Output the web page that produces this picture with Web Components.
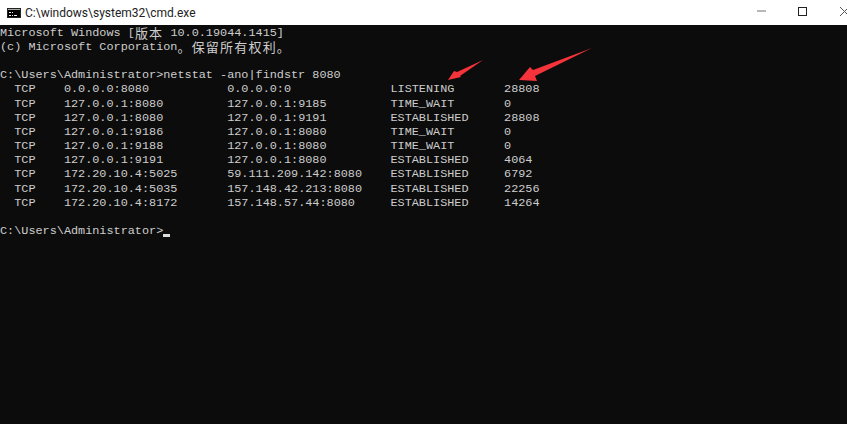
<!DOCTYPE html>
<html>
<head>
<meta charset="utf-8">
<style>
html, body { margin: 0; padding: 0; background: #0c0c0c; }
</style>
</head>
<body>
<cmd-window>
<cmd-titlebar slot="bar" label="C:\windows\system32\cmd.exe"></cmd-titlebar>
<cmd-arrows slot="over"></cmd-arrows>
<cmd-line><span>Microsoft Windows [</span><cmd-cjk><span>版本</span></cmd-cjk><span> 10.0.19044.1415]</span></cmd-line>
<cmd-line><span>(c) Microsoft Corporation</span><cmd-cjk><span>。保留所有权利。</span></cmd-cjk></cmd-line>
<cmd-line></cmd-line>
<cmd-line><span>C:\Users\Administrator&gt;netstat -ano|findstr 8080</span></cmd-line>
<cmd-row><span>TCP</span><span>0.0.0.0:8080</span><span>0.0.0.0:0</span><span>LISTENING</span><span>28808</span></cmd-row>
<cmd-row><span>TCP</span><span>127.0.0.1:8080</span><span>127.0.0.1:9185</span><span>TIME_WAIT</span><span>0</span></cmd-row>
<cmd-row><span>TCP</span><span>127.0.0.1:8080</span><span>127.0.0.1:9191</span><span>ESTABLISHED</span><span>28808</span></cmd-row>
<cmd-row><span>TCP</span><span>127.0.0.1:9186</span><span>127.0.0.1:8080</span><span>TIME_WAIT</span><span>0</span></cmd-row>
<cmd-row><span>TCP</span><span>127.0.0.1:9188</span><span>127.0.0.1:8080</span><span>TIME_WAIT</span><span>0</span></cmd-row>
<cmd-row><span>TCP</span><span>127.0.0.1:9191</span><span>127.0.0.1:8080</span><span>ESTABLISHED</span><span>4064</span></cmd-row>
<cmd-row><span>TCP</span><span>172.20.10.4:5025</span><span>59.111.209.142:8080</span><span>ESTABLISHED</span><span>6792</span></cmd-row>
<cmd-row><span>TCP</span><span>172.20.10.4:5035</span><span>157.148.42.213:8080</span><span>ESTABLISHED</span><span>22256</span></cmd-row>
<cmd-row><span>TCP</span><span>172.20.10.4:8172</span><span>157.148.57.44:8080</span><span>ESTABLISHED</span><span>14264</span></cmd-row>
<cmd-line></cmd-line>
<cmd-line><span>C:\Users\Administrator&gt;</span><cmd-cursor></cmd-cursor></cmd-line>
</cmd-window>
<script>
class CmdWindow extends HTMLElement {
    constructor() {
        super();
        this.attachShadow({ mode: 'open' });
        this.shadowRoot.innerHTML = `
            <style>
                :host {
                    display: flex;
                    flex-direction: column;
                    position: relative;
                    width: 847px;
                    height: 424px;
                    overflow: hidden;
                    background: #0c0c0c;
                }
                .screen {
                    flex: 1;
                    display: flex;
                    flex-direction: column;
                    padding-top: 0.6px;
                }
            </style>
            <slot name="bar"></slot>
            <slot name="over"></slot>
            <div class="screen"><slot></slot></div>
        `;
    }
}

class CmdTitlebar extends HTMLElement {
    constructor() {
        super();
        this.attachShadow({ mode: 'open' });
        const label = this.getAttribute('label') || '';
        this.shadowRoot.innerHTML = `
            <style>
                :host {
                    flex: 0 0 25px;
                    display: flex;
                    align-items: center;
                    background: #fff;
                    padding-left: 7px;
                    gap: 4px;
                }
                .title {
                    flex: 1;
                    font: 12px Roboto, "Open Sans", sans-serif;
                    color: #222;
                    white-space: nowrap;
                }
                .btns {
                    display: flex;
                    align-items: center;
                    height: 100%;
                }
                svg { display: block; flex: none; }
            </style>
            <svg width="14" height="10" viewBox="0 0 14 10">
                <rect width="14" height="10" fill="#222"/>
                <rect x="1" y="1" width="12" height="1" fill="#aaa"/>
                <rect x="1" y="2" width="12" height="7" fill="#000"/>
                <path d="M2 4.5h2M2 7.5h2M5 4.5h1M5 7.5h1M7 7.5h3" stroke="#eee" stroke-width="1"/>
            </svg>
            <div class="title">${label}</div>
            <div class="btns">
                <svg width="41" height="25" viewBox="0 0 41 25"><path d="M0 11h9" stroke="#999" stroke-width="1.4"/></svg>
                <svg width="42" height="25" viewBox="0 0 42 25"><rect x="0.5" y="7.5" width="8" height="8" fill="none" stroke="#222" stroke-width="1"/></svg>
                <svg width="7" height="25" viewBox="0 0 7 25"><path d="M0 7l9 9M9 7l-9 9" stroke="#555" stroke-width="1"/></svg>
            </div>
        `;
    }
}

class CmdArrows extends HTMLElement {
    constructor() {
        super();
        this.attachShadow({ mode: 'open' });
        this.shadowRoot.innerHTML = `
            <style>
                :host { position: absolute; left: 0; top: 0; z-index: 2; }
                svg { display: block; }
            </style>
            <svg width="847" height="100" viewBox="0 0 847 100">
                <path d="M483 60 L460 76 L461 77 L448 80 L454 71 L457 72 Z" fill="#f5333a"/>
                <path d="M592 48 L535 76 L537 81 L519 80 L530 67 L533 70 Z" fill="#f5333a"/>
            </svg>
        `;
    }
}

class CmdLine extends HTMLElement {
    constructor() {
        super();
        this.attachShadow({ mode: 'open' });
        this.shadowRoot.innerHTML = `
            <style>
                :host {
                    display: grid;
                    flex: none;
                    grid-auto-flow: column;
                    grid-auto-columns: max-content;
                    justify-content: start;
                    height: 14.2px;
                    line-height: 14.2px;
                    font-family: "Liberation Mono", monospace;
                    font-size: 11.83px;
                    color: #cccccc;
                    white-space: pre;
                }
            </style>
            <slot></slot>
        `;
    }
}

class CmdRow extends HTMLElement {
    constructor() {
        super();
        this.attachShadow({ mode: 'open' });
        this.shadowRoot.innerHTML = `
            <style>
                :host {
                    display: grid;
                    flex: none;
                    grid-template-columns: 49.7px 163.3px 163.3px 113.6px auto;
                    padding-left: 14.2px;
                    height: 14.2px;
                    line-height: 14.2px;
                    font-family: "Liberation Mono", monospace;
                    font-size: 11.83px;
                    color: #cccccc;
                    white-space: pre;
                }
            </style>
            <slot></slot>
        `;
    }
}

class CmdCjk extends HTMLElement {
    constructor() {
        super();
        this.attachShadow({ mode: 'open' });
        this.shadowRoot.innerHTML = `
            <style>
                :host {
                    display: grid;
                    height: 14.2px;
                    font-family: "Noto Sans CJK SC", sans-serif;
                    font-size: 13px;
                    letter-spacing: 1.2px;
                }
            </style>
            <slot></slot>
        `;
    }
}

class CmdCursor extends HTMLElement {
    constructor() {
        super();
        this.attachShadow({ mode: 'open' });
        this.shadowRoot.innerHTML = `
            <style>
                :host {
                    display: block;
                    align-self: start;
                    width: 7.1px;
                    height: 3px;
                    margin-top: 10px;
                    background: #ddd;
                }
            </style>
        `;
    }
}

customElements.define('cmd-window', CmdWindow);
customElements.define('cmd-titlebar', CmdTitlebar);
customElements.define('cmd-arrows', CmdArrows);
customElements.define('cmd-line', CmdLine);
customElements.define('cmd-row', CmdRow);
customElements.define('cmd-cjk', CmdCjk);
customElements.define('cmd-cursor', CmdCursor);
</script>
</body>
</html>
